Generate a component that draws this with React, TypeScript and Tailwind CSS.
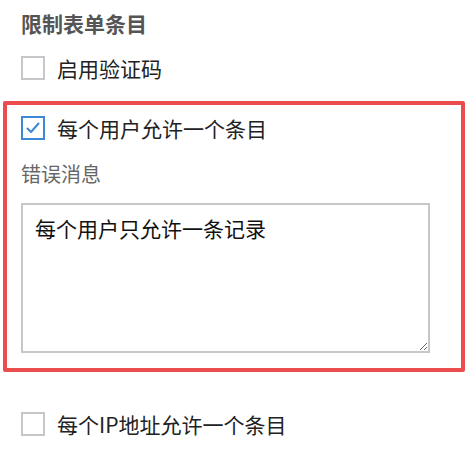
import { useState } from "react";

const font = { fontFamily: '"Noto Sans CJK SC", "Noto Sans", sans-serif' };

interface CheckProps {
  checked: boolean;
  label: string;
  onToggle: () => void;
}

const CheckRow = ({ checked, label, onToggle }: CheckProps) => (
  <label className="flex items-center h-[24px] cursor-pointer select-none" onClick={onToggle}>
    <span
      className={
        checked
          ? "w-[24px] h-[24px] border-2 border-[#3b87d8] flex items-center justify-center bg-white"
          : "w-[24px] h-[24px] border-2 border-[#c6c6cb] bg-white"
      }
    >
      {checked && (
        <svg width="16" height="16" viewBox="0 0 16 16" fill="none">
          <path d="M2.5 8.5 L6 12 L13.5 3.5" stroke="#3b87d8" strokeWidth="2" strokeLinecap="round" strokeLinejoin="round" />
        </svg>
      )}
    </span>
    <span className="ml-[12px] text-[21px] leading-[28px] text-[#222]">{label}</span>
  </label>
);

export default function App() {
  const [captcha, setCaptcha] = useState(false);
  const [perUser, setPerUser] = useState(true);
  const [perIp, setPerIp] = useState(false);

  return (
    <div className="w-[470px] h-[454px] bg-white overflow-hidden" style={font}>
      <div className="pl-[21px] pt-[9px]">
        <h2 className="text-[21px] leading-[28px] font-bold text-[#555]">限制表单条目</h2>
        <div className="mt-[19px]">
          <CheckRow checked={captcha} label="启用验证码" onToggle={() => setCaptcha(!captcha)} />
        </div>
      </div>

      <div className="mt-[21px] ml-[3px] w-[462px] border-4 border-[#eb4d4f] rounded-[2px] px-[14px] pt-[11px] pb-[15px]">
        <CheckRow checked={perUser} label="每个用户允许一个条目" onToggle={() => setPerUser(!perUser)} />
        <div className="mt-[20px] text-[20px] leading-[28px] text-[#666]">错误消息</div>
        <textarea
          className="mt-[15px] block w-[409px] h-[150px] border-2 border-[#c6c6cb] pl-[12px] pt-[9px] text-[21px] leading-[28px] text-[#111] outline-none"
          style={font}
          defaultValue="每个用户只允许一条记录"
        />
      </div>

      <div className="pl-[21px] mt-[40px]">
        <CheckRow checked={perIp} label="每个IP地址允许一个条目" onToggle={() => setPerIp(!perIp)} />
      </div>
    </div>
  );
}
